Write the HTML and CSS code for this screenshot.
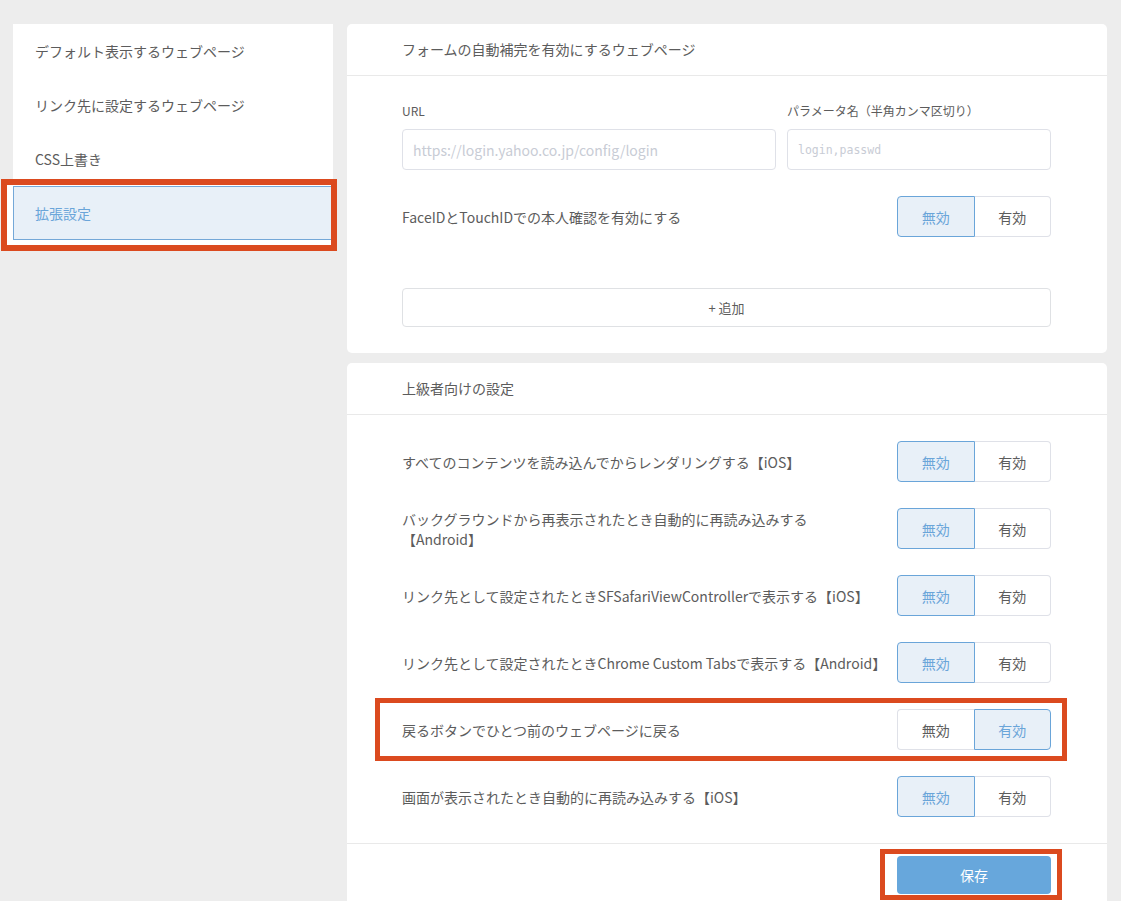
FILE: index.html
```html
<!DOCTYPE html>
<html lang="ja">
<head>
  <meta charset="UTF-8" />
  <meta name="viewport" content="width=device-width, initial-scale=1.0"/>
  <title>拡張設定</title>
  <link rel="stylesheet" href="styles.css">
</head>
<body>
  <div class="layout">
    <!-- Side menu -->
    <nav class="sidebar">
      <a class="side-item">デフォルト表示するウェブページ</a>
      <a class="side-item">リンク先に設定するウェブページ</a>
      <a class="side-item">CSS上書き</a>
      <a class="side-item active">拡張設定</a>
    </nav>

    <main class="main">
      <!-- Autofill -->
      <section class="card">
        <h2 class="card-head">フォームの自動補完を有効にするウェブページ</h2>
        <div class="card-body">
          <div class="field-row">
            <div class="field">
              <label class="field-label">URL</label>
              <input class="input" type="text" placeholder="https://login.yahoo.co.jp/config/login" />
            </div>
            <div class="field">
              <label class="field-label">パラメータ名（半角カンマ区切り）</label>
              <input class="input mono" type="text" placeholder="login,passwd" />
            </div>
          </div>
          <div class="row">
            <span class="row-label">FaceIDとTouchIDでの本人確認を有効にする</span>
            <div class="seg"><span class="opt on">無効</span><span class="opt">有効</span></div>
          </div>
          <button class="add-btn">+ 追加</button>
        </div>
      </section>

      <!-- Advanced -->
      <section class="card">
        <h2 class="card-head">上級者向けの設定</h2>
        <div class="card-body rows">
          <div class="row">
            <span class="row-label">すべてのコンテンツを読み込んでからレンダリングする【iOS】</span>
            <div class="seg"><span class="opt on">無効</span><span class="opt">有効</span></div>
          </div>
          <div class="row">
            <span class="row-label">バックグラウンドから再表示されたとき自動的に再読み込みする【Android】</span>
            <div class="seg"><span class="opt on">無効</span><span class="opt">有効</span></div>
          </div>
          <div class="row">
            <span class="row-label">リンク先として設定されたときSFSafariViewControllerで表示する【iOS】</span>
            <div class="seg"><span class="opt on">無効</span><span class="opt">有効</span></div>
          </div>
          <div class="row">
            <span class="row-label">リンク先として設定されたときChrome Custom Tabsで表示する【Android】</span>
            <div class="seg"><span class="opt on">無効</span><span class="opt">有効</span></div>
          </div>
          <div class="row">
            <span class="row-label">戻るボタンでひとつ前のウェブページに戻る</span>
            <div class="seg"><span class="opt">無効</span><span class="opt on">有効</span></div>
          </div>
          <div class="row">
            <span class="row-label">画面が表示されたとき自動的に再読み込みする【iOS】</span>
            <div class="seg"><span class="opt on">無効</span><span class="opt">有効</span></div>
          </div>
        </div>
        <div class="card-foot">
          <button class="save-btn">保存</button>
        </div>
      </section>
    </main>
  </div>

  <!-- annotation frames -->
  <div class="mark mark-menu"></div>
  <div class="mark mark-row"></div>
  <div class="mark mark-save"></div>
</body>
</html>
```

FILE: styles.css
```css
body {
  margin: 0;
  background: #ededed;
  font-family: "Noto Sans CJK JP", "Noto Sans", sans-serif;
  font-size: 14px;
  color: #5c5c5c;
}
.layout {
  display: flex;
  align-items: flex-start;
  gap: 14px;
  padding: 24px 14px 0 13px;
}

/* sidebar */
.sidebar {
  width: 320px;
  flex: none;
  background: #fff;
  display: flex;
  flex-direction: column;
}
.side-item {
  height: 54px;
  line-height: 54px;
  padding: 0 22px;
  color: #5c5c5c;
  box-sizing: border-box;
}
.side-item.active {
  background: #e8f0f8;
  border: 1px solid #74a8d8;
  line-height: 52px;
  padding-left: 21px;
  color: #6aa5d9;
}

/* cards */
.main {
  flex: 1;
  display: flex;
  flex-direction: column;
  gap: 10px;
}
.card {
  background: #fff;
  border-radius: 5px;
}
.card-head {
  margin: 0;
  height: 51px;
  line-height: 51px;
  padding-left: 55px;
  font-size: 14px;
  font-weight: 400;
  color: #5c5c5c;
  border-bottom: 1px solid #e9e9e9;
}
.card-body {
  padding: 26px 56px 26px 55px;
  display: flex;
  flex-direction: column;
}
.rows {
  gap: 26px;
}
.field-row {
  display: grid;
  grid-template-columns: 374px 1fr;
  gap: 11px;
  margin-bottom: 26px;
}
.field-label {
  display: block;
  font-size: 12px;
  line-height: 18px;
  margin-bottom: 9px;
}
.input {
  width: 100%;
  box-sizing: border-box;
  height: 41px;
  border: 1px solid #dfe1e8;
  border-radius: 4px;
  padding: 0 10px;
  font-family: inherit;
  font-size: 14px;
  color: #5c5c5c;
}
.input::placeholder {
  color: #c8ccd5;
}
.input.mono {
  font-family: "DejaVu Sans Mono", monospace;
  font-size: 11.5px;
}

.row {
  display: flex;
  align-items: center;
  min-height: 41px;
}
.row-label {
  flex: 1;
  line-height: 20px;
  margin-right: 17px;
}
.seg {
  display: flex;
  width: 154px;
  height: 41px;
  flex: none;
}
.opt {
  flex: 1;
  display: flex;
  align-items: center;
  justify-content: center;
  border: 1px solid #dfe1e8;
  color: #5c5c5c;
}
.opt:first-child {
  border-radius: 4px 0 0 4px;
}
.opt:last-child {
  border-radius: 0 4px 4px 0;
}
.opt:first-child:not(.on) {
  border-right: 0;
}
.opt:last-child:not(.on) {
  border-left: 0;
}
.opt.on {
  background: #e8f0f8;
  border-color: #6aa5d9;
  color: #6aa5d9;
}

.add-btn {
  margin-top: 51px;
  height: 39px;
  background: #fff;
  border: 1px solid #dfe1e4;
  border-radius: 4px;
  font-family: inherit;
  font-size: 13px;
  color: #5c5c5c;
}

.card-foot {
  border-top: 1px solid #e9e9e9;
  padding: 12px 56px 12px 0;
  display: flex;
  justify-content: flex-end;
}
.save-btn {
  width: 154px;
  height: 38px;
  border: none;
  border-radius: 4px;
  background: #67a7dc;
  color: #fff;
  font-family: inherit;
  font-size: 14px;
}

/* annotation frames drawn over the screenshot */
.mark {
  position: absolute;
  border: 6px solid #db4a1f;
  box-sizing: border-box;
}
.mark::before {
  content: "";
  position: absolute;
  inset: 0;
  background: #fff;
  z-index: -1;
}
.mark-menu {
  left: 1px;
  top: 179px;
  width: 336px;
  height: 72px;
}
.mark-row {
  left: 375px;
  top: 698px;
  width: 692px;
  height: 63px;
  border-width: 5px;
}
.mark-save {
  left: 880px;
  top: 849px;
  width: 182px;
  height: 51px;
  border-width: 5px;
}
```
